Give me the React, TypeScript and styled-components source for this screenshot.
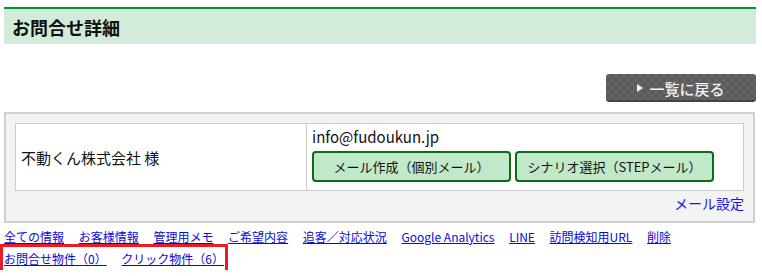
import React from "react";
import styled, { createGlobalStyle } from "styled-components";

const Global = createGlobalStyle`
  html, body { margin: 0; padding: 0; background: #fff; }
  body { font-family: "Noto Sans CJK JP", "Noto Sans", sans-serif; color: #111; }
  * { box-sizing: border-box; }
`;

const Page = styled.div`
  width: 752px;
  margin: 7px 0 0 4px;
  display: flex;
  flex-direction: column;
`;

const Header = styled.div`
  height: 37px;
  border-top: 2px solid #00952f;
  background: #d3ecda;
  display: flex;
  align-items: center;
  padding-left: 8px;
`;

const Title = styled.h1`
  margin: 0;
  font-size: 18px;
  font-weight: 700;
  line-height: 1;
  color: #111;
`;

const BackRow = styled.div`
  display: flex;
  justify-content: flex-end;
  margin-top: 30px;
`;

const BackButton = styled.a`
  width: 150px;
  height: 28px;
  border-radius: 3px;
  background-color: #646464;
  background-image:
    linear-gradient(45deg, #5a5a5a 25%, transparent 25%, transparent 75%, #5a5a5a 75%),
    linear-gradient(45deg, #5a5a5a 25%, transparent 25%, transparent 75%, #5a5a5a 75%);
  background-size: 8px 8px;
  background-position: 0 0, 4px 4px;
  box-shadow: inset 0 -2px 0 #444;
  display: flex;
  align-items: center;
  justify-content: center;
  gap: 6px;
  color: #f2f2f2;
  font-size: 15px;
  font-weight: 500;
  text-decoration: none;
  cursor: pointer;
`;

const Tri = styled.span`
  width: 0;
  height: 0;
  border-top: 4px solid transparent;
  border-bottom: 4px solid transparent;
  border-left: 6px solid #f2f2f2;
`;

const Box = styled.div`
  margin-top: 10px;
  width: 751px;
  background: #f3f3f3;
  border: 2px solid #cfcfcf;
  padding: 9px 9px 8px 9px;
  display: flex;
  flex-direction: column;
`;

const Table = styled.div`
  display: grid;
  grid-template-columns: 290px 1fr;
  background: #fff;
  border: 1px solid #cccccc;
`;

const NameCell = styled.div`
  display: flex;
  align-items: center;
  padding-left: 5px;
  font-size: 15px;
  color: #111;
`;

const MailCell = styled.div`
  border-left: 1px solid #cccccc;
  padding: 3px 5px 8px 5px;
  display: flex;
  flex-direction: column;
  gap: 4px;
`;

const Email = styled.div`
  font-size: 15px;
  line-height: 20px;
  color: #111;
`;

const ButtonRow = styled.div`
  display: flex;
  gap: 4px;
`;

const GreenButton = styled.button`
  width: 199px;
  height: 31px;
  background: #c2e8ca;
  border: 2px solid #0f6a16;
  border-radius: 4px;
  font-family: "Noto Sans CJK JP", "Noto Sans", sans-serif;
  font-size: 13px;
  color: #111;
  padding: 0;
  cursor: pointer;
`;

const SettingRow = styled.div`
  display: flex;
  justify-content: flex-end;
  margin-top: 2px;
`;

const SettingLink = styled.a`
  font-size: 14px;
  line-height: 20px;
  color: #1414ee;
  text-decoration: none;
  cursor: pointer;
`;

const Links = styled.div`
  margin-top: 3px;
  display: flex;
  flex-direction: column;
  font-size: 12px;
  line-height: 21px;
`;

const LinkLine = styled.div<{ $marked?: boolean }>`
  display: flex;
  gap: 14.7px;
  width: fit-content;
  ${(p) => (p.$marked ? "margin-top: 1px; padding-bottom: 1px; outline: 3px solid #ec1c24; outline-offset: 1px;" : "")}
`;

const NavLink = styled.a`
  color: #0b0bd9;
  text-decoration: underline;
  cursor: pointer;
`;

const row1 = [
  "全ての情報",
  "お客様情報",
  "管理用メモ",
  "ご希望内容",
  "追客／対応状況",
  "Google Analytics",
  "LINE",
  "訪問検知用URL",
  "削除",
];
const row2 = ["お問合せ物件（0）", "クリック物件（6）"];

export default function App() {
  return (
    <>
      <Global />
      <Page>
        <Header>
          <Title>お問合せ詳細</Title>
        </Header>
        <BackRow>
          <BackButton>
            <Tri />
            一覧に戻る
          </BackButton>
        </BackRow>
        <Box>
          <Table>
            <NameCell>不動くん株式会社 様</NameCell>
            <MailCell>
              <Email>info@fudoukun.jp</Email>
              <ButtonRow>
                <GreenButton>メール作成（個別メール）</GreenButton>
                <GreenButton>シナリオ選択（STEPメール）</GreenButton>
              </ButtonRow>
            </MailCell>
          </Table>
          <SettingRow>
            <SettingLink>メール設定</SettingLink>
          </SettingRow>
        </Box>
        <Links>
          <LinkLine>
            {row1.map((t) => (
              <NavLink key={t}>{t}</NavLink>
            ))}
          </LinkLine>
          <LinkLine $marked>
            {row2.map((t) => (
              <NavLink key={t}>{t}</NavLink>
            ))}
          </LinkLine>
        </Links>
      </Page>
    </>
  );
}
